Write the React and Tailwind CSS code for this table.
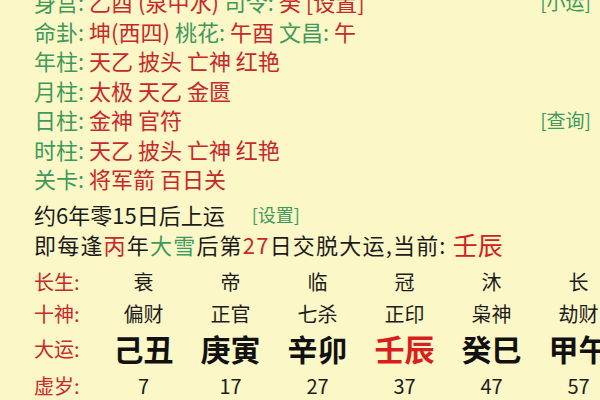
const G = ({ children }) => <span className="text-[#3c9a5c]">{children}</span>;
const R = ({ children }) => <span className="text-[#c8282c]">{children}</span>;

const rows = [
  { label: '身宫', value: <><R>乙酉 (泉中水)</R> <G>司令:</G> <R>癸</R> <R>[设置]</R></>, right: '[小运]' },
  { label: '命卦', value: <><R>坤(西四)</R> <G>桃花:</G> <R>午酉</R> <G>文昌:</G> <R>午</R></> },
  { label: '年柱', value: <R>天乙 披头 亡神 红艳</R> },
  { label: '月柱', value: <R>太极 天乙 金匮</R> },
  { label: '日柱', value: <R>金神 官符</R>, right: '[查询]' },
  { label: '时柱', value: <R>天乙 披头 亡神 红艳</R> },
  { label: '关卡', value: <R>将军箭 百日关</R> },
];

const cols = [
  { cs: '衰', ss: '偏财', dy: '己丑', age: 7 },
  { cs: '帝', ss: '正官', dy: '庚寅', age: 17 },
  { cs: '临', ss: '七杀', dy: '辛卯', age: 27 },
  { cs: '冠', ss: '正印', dy: '壬辰', age: 37, cur: true },
  { cs: '沐', ss: '枭神', dy: '癸巳', age: 47 },
  { cs: '长', ss: '劫财', dy: '甲午', age: 57 },
];

export default function App() {
  return (
    <div
      className="w-[600px] h-[400px] overflow-hidden bg-[#fcf7c6] text-[#1c1c1c]"
      style={{ fontFamily: '"Noto Sans CJK SC", "Noto Sans", sans-serif' }}
    >
      <div className="mt-[-13px] pl-[34px] pr-[9px] text-[22px]">
        {rows.map((r) => (
          <div key={r.label} className="h-[29.5px] flex items-center justify-between whitespace-nowrap">
            <div>
              <G>{r.label}:</G> {r.value}
            </div>
            {r.right && <span className="text-[19px] text-[#3c9a5c]">{r.right}</span>}
          </div>
        ))}

        <div className="h-[30px] mt-[6px] flex items-center whitespace-nowrap">
          约6年零15日后上运<span className="ml-[27px] text-[18px] text-[#3c9a5c]">[设置]</span>
        </div>
        <div className="h-[30px] flex items-center whitespace-nowrap tracking-[1.2px]">
          即每逢<R>丙</R>年<G>大雪</G>后第<R>27</R>日交脱大运,当前:
          <span className="ml-[6px] text-[25px] tracking-normal text-[#d02020]">壬辰</span>
        </div>
      </div>

      <div className="pl-[34px] mt-[5px] grid grid-cols-[66px_repeat(6,87px)] whitespace-nowrap">
        <div className="h-[34px] flex items-center text-[20px] text-[#c8282c]">长生:</div>
        {cols.map((c) => (
          <div key={c.cs} className="h-[34px] flex items-center justify-center text-[20px]">{c.cs}</div>
        ))}
        <div className="h-[30px] flex items-center text-[20px] text-[#c8282c]">十神:</div>
        {cols.map((c) => (
          <div key={c.ss} className="h-[30px] flex items-center justify-center text-[20px]">{c.ss}</div>
        ))}
        <div className="h-[40px] flex items-center text-[20px] text-[#c8282c]">大运:</div>
        {cols.map((c) => (
          <div
            key={c.dy}
            className={`h-[40px] flex items-center justify-center text-[30px] font-bold ${c.cur ? 'text-[#d81e1e]' : 'text-[#111]'}`}
          >
            {c.dy}
          </div>
        ))}
        <div className="h-[34px] flex items-center text-[20px] text-[#c8282c]">虚岁:</div>
        {cols.map((c) => (
          <div key={c.age} className="h-[34px] flex items-center justify-center text-[20px]">{c.age}</div>
        ))}
      </div>
    </div>
  );
}
